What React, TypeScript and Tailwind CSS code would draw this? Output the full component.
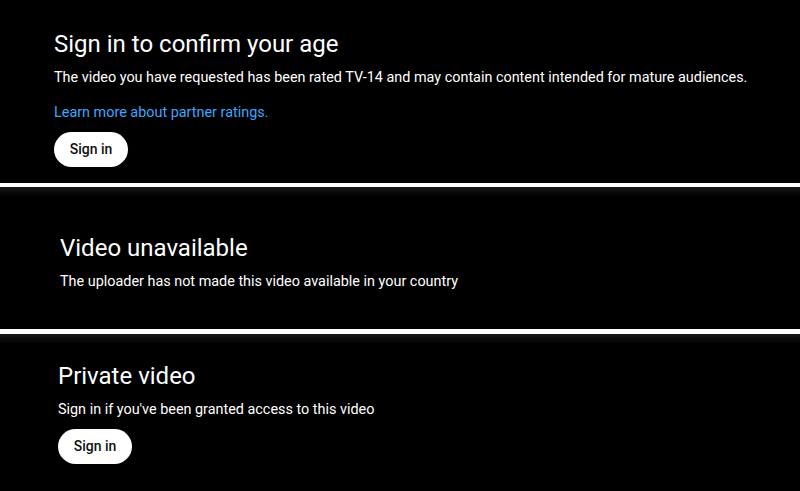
/**
 * Three stacked player error cards (age gate, unavailable, private),
 * separated by thin white rules.
 */
function SignInButton() {
  return (
    <button className="h-[35px] w-[74px] rounded-full bg-white text-[14px] font-medium text-[#0f0f0f]">
      Sign in
    </button>
  );
}

export default function App() {
  return (
    <div className="flex h-[491px] w-[800px] flex-col bg-white font-['Roboto',sans-serif] text-white">
      {/* age gate */}
      <section className="h-[183px] bg-black pl-[54px] pt-[28px]">
        <h1 className="text-[24px] leading-[32px]">Sign in to confirm your age</h1>
        <p className="mt-[8px] text-[14.4px] leading-[20px]">
          The video you have requested has been rated TV-14 and may contain content intended for mature audiences.
        </p>
        <a className="mt-[15px] block text-[14.4px] leading-[20px] text-[#3ea6ff]">
          Learn more about partner ratings.
        </a>
        <div className="mt-[9px]">
          <SignInButton />
        </div>
      </section>

      {/* unavailable */}
      <section className="mt-[4px] h-[142px] bg-black bg-[linear-gradient(to_bottom,#181818,#000_10px)] pl-[60px] pt-[45px]">
        <h1 className="text-[24px] leading-[32px]">Video unavailable</h1>
        <p className="mt-[8px] text-[14.4px] leading-[20px]">
          The uploader has not made this video available in your country
        </p>
      </section>

      {/* private */}
      <section className="mt-[5px] flex-1 bg-black bg-[linear-gradient(to_bottom,#181818,#000_10px)] pl-[58px] pt-[26px]">
        <h1 className="text-[24px] leading-[32px]">Private video</h1>
        <p className="mt-[8px] text-[14.4px] leading-[20px]">
          Sign in if you've been granted access to this video
        </p>
        <div className="mt-[9px]">
          <SignInButton />
        </div>
      </section>
    </div>
  );
}
